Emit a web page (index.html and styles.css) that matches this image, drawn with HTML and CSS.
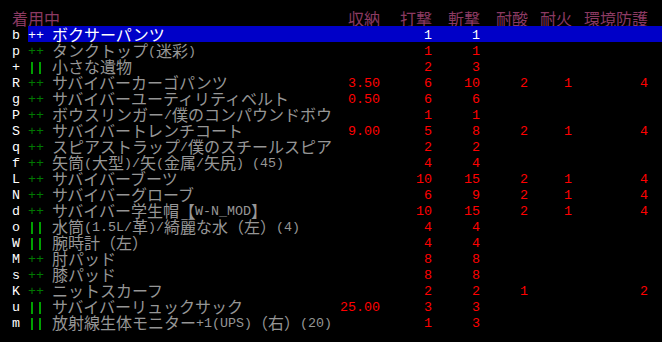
FILE: index.html
```html
<!DOCTYPE html>
<html lang="ja">
<head>
<meta charset="utf-8">
<title>着用中</title>
<link rel="stylesheet" href="styles.css">
</head>
<body>
<div class="screen">
  <div class="head">
    <span class="title">着用中</span>
    <span class="h">収納</span>
    <span class="h">打撃</span>
    <span class="h">斬撃</span>
    <span class="h">耐酸</span>
    <span class="h">耐火</span>
    <span class="h">環境防護</span>
  </div>

  <div class="row"><span class="inv">b</span><div class="item sel"><span class="mk">++</span><span class="nm">ボクサーパンツ</span><span class="n"></span><span class="n">1</span><span class="n">1</span><span class="n"></span><span class="n"></span><span class="n"></span></div></div>

  <div class="row"><span class="inv">p</span><div class="item"><span class="mk dg">++</span><span class="nm">タンクトップ<span class="l">(</span>迷彩<span class="l">)</span></span><span class="n"></span><span class="n">1</span><span class="n">1</span><span class="n"></span><span class="n"></span><span class="n"></span></div></div>

  <div class="row"><span class="inv">+</span><div class="item"><span class="mk lg">||</span><span class="nm">小さな遺物</span><span class="n"></span><span class="n">2</span><span class="n">3</span><span class="n"></span><span class="n"></span><span class="n"></span></div></div>

  <div class="row"><span class="inv">R</span><div class="item"><span class="mk dg">++</span><span class="nm">サバイバーカーゴパンツ</span><span class="n">3.50</span><span class="n">6</span><span class="n">10</span><span class="n">2</span><span class="n">1</span><span class="n">4</span></div></div>

  <div class="row"><span class="inv">g</span><div class="item"><span class="mk dg">++</span><span class="nm">サバイバーユーティリティベルト</span><span class="n">0.50</span><span class="n">6</span><span class="n">6</span><span class="n"></span><span class="n"></span><span class="n"></span></div></div>

  <div class="row"><span class="inv">P</span><div class="item"><span class="mk dg">++</span><span class="nm">ボウスリンガー<span class="l">/</span>僕のコンパウンドボウ</span><span class="n"></span><span class="n">1</span><span class="n">1</span><span class="n"></span><span class="n"></span><span class="n"></span></div></div>

  <div class="row"><span class="inv">S</span><div class="item"><span class="mk dg">++</span><span class="nm">サバイバートレンチコート</span><span class="n">9.00</span><span class="n">5</span><span class="n">8</span><span class="n">2</span><span class="n">1</span><span class="n">4</span></div></div>

  <div class="row"><span class="inv">q</span><div class="item"><span class="mk dg">++</span><span class="nm">スピアストラップ<span class="l">/</span>僕のスチールスピア</span><span class="n"></span><span class="n">2</span><span class="n">2</span><span class="n"></span><span class="n"></span><span class="n"></span></div></div>

  <div class="row"><span class="inv">f</span><div class="item"><span class="mk dg">++</span><span class="nm">矢筒<span class="l">(</span>大型<span class="l">)/</span>矢<span class="l">(</span>金属<span class="l">/</span>矢尻<span class="l">) (45)</span></span><span class="n"></span><span class="n">4</span><span class="n">4</span><span class="n"></span><span class="n"></span><span class="n"></span></div></div>

  <div class="row"><span class="inv">L</span><div class="item"><span class="mk dg">++</span><span class="nm">サバイバーブーツ</span><span class="n"></span><span class="n">10</span><span class="n">15</span><span class="n">2</span><span class="n">1</span><span class="n">4</span></div></div>

  <div class="row"><span class="inv">N</span><div class="item"><span class="mk dg">++</span><span class="nm">サバイバーグローブ</span><span class="n"></span><span class="n">6</span><span class="n">9</span><span class="n">2</span><span class="n">1</span><span class="n">4</span></div></div>

  <div class="row"><span class="inv">d</span><div class="item"><span class="mk dg">++</span><span class="nm">サバイバー学生帽【<span class="l">W-N_MOD</span>】</span><span class="n"></span><span class="n">10</span><span class="n">15</span><span class="n">2</span><span class="n">1</span><span class="n">4</span></div></div>

  <div class="row"><span class="inv">o</span><div class="item"><span class="mk lg">||</span><span class="nm">水筒<span class="l">(1.5L/</span>革<span class="l">)/</span>綺麗な水（左）<span class="l">(4)</span></span><span class="n"></span><span class="n">4</span><span class="n">4</span><span class="n"></span><span class="n"></span><span class="n"></span></div></div>

  <div class="row"><span class="inv">W</span><div class="item"><span class="mk lg">||</span><span class="nm">腕時計（左）</span><span class="n"></span><span class="n">4</span><span class="n">4</span><span class="n"></span><span class="n"></span><span class="n"></span></div></div>

  <div class="row"><span class="inv">M</span><div class="item"><span class="mk dg">++</span><span class="nm">肘パッド</span><span class="n"></span><span class="n">8</span><span class="n">8</span><span class="n"></span><span class="n"></span><span class="n"></span></div></div>

  <div class="row"><span class="inv">s</span><div class="item"><span class="mk dg">++</span><span class="nm">膝パッド</span><span class="n"></span><span class="n">8</span><span class="n">8</span><span class="n"></span><span class="n"></span><span class="n"></span></div></div>

  <div class="row"><span class="inv">K</span><div class="item"><span class="mk dg">++</span><span class="nm">ニットスカーフ</span><span class="n"></span><span class="n">2</span><span class="n">2</span><span class="n">1</span><span class="n"></span><span class="n">2</span></div></div>

  <div class="row"><span class="inv">u</span><div class="item"><span class="mk lg">||</span><span class="nm">サバイバーリュックサック</span><span class="n">25.00</span><span class="n">3</span><span class="n">3</span><span class="n"></span><span class="n"></span><span class="n"></span></div></div>

  <div class="row"><span class="inv">m</span><div class="item"><span class="mk lg">||</span><span class="nm">放射線生体モニター<span class="l">+1(UPS)</span>（右）<span class="l">(20)</span></span><span class="n"></span><span class="n">1</span><span class="n">3</span><span class="n"></span><span class="n"></span><span class="n"></span></div></div>
</div>
</body>
</html>
```
FILE: styles.css
```css
html, body {
  margin: 0;
  padding: 0;
  background: #000;
}

.screen {
  width: 662px;
  height: 342px;
  padding-top: 10px;
  box-sizing: border-box;
  font-family: "Noto Sans CJK JP", sans-serif;
  font-size: 16px;
  line-height: 16px;
  color: #969696;
  overflow: hidden;
}

.head {
  display: grid;
  grid-template-columns: 320px 48px 52px 48px 48px 44px 76px;
  height: 16px;
  padding-left: 12px;
  color: #8b3a62;
  white-space: nowrap;
}

.h {
  text-align: right;
}

.row {
  display: flex;
  height: 16px;
  padding-left: 12px;
}

.inv {
  width: 16px;
  flex: none;
  font-family: "Liberation Mono", monospace;
  font-size: 13.33px;
  color: #fff;
  padding-top: 2px;
  height: 16px;
  box-sizing: border-box;
}

.item {
  flex: 1;
  display: grid;
  grid-template-columns: 24px 280px 48px 52px 48px 48px 44px 76px;
  grid-template-rows: 16px;
  padding-right: 14px;
  height: 16px;
}

.mk,
.n {
  font-family: "Liberation Mono", monospace;
  font-size: 13.33px;
  padding-top: 2px;
  height: 16px;
  box-sizing: border-box;
  white-space: pre;
}

.n {
  text-align: right;
  color: #ff0000;
}

.dg {
  color: #007800;
}

.lg {
  color: #00ff00;
}

.nm {
  white-space: nowrap;
  height: 16px;
  color: #969696;
}

.l {
  font-family: "Liberation Mono", monospace;
  font-size: 13.33px;
  line-height: 10px;
  vertical-align: 2px;
  white-space: pre;
}

.sel {
  background: #0000c8;
}

.sel .mk,
.sel .nm,
.sel .n {
  color: #fff;
}
```
